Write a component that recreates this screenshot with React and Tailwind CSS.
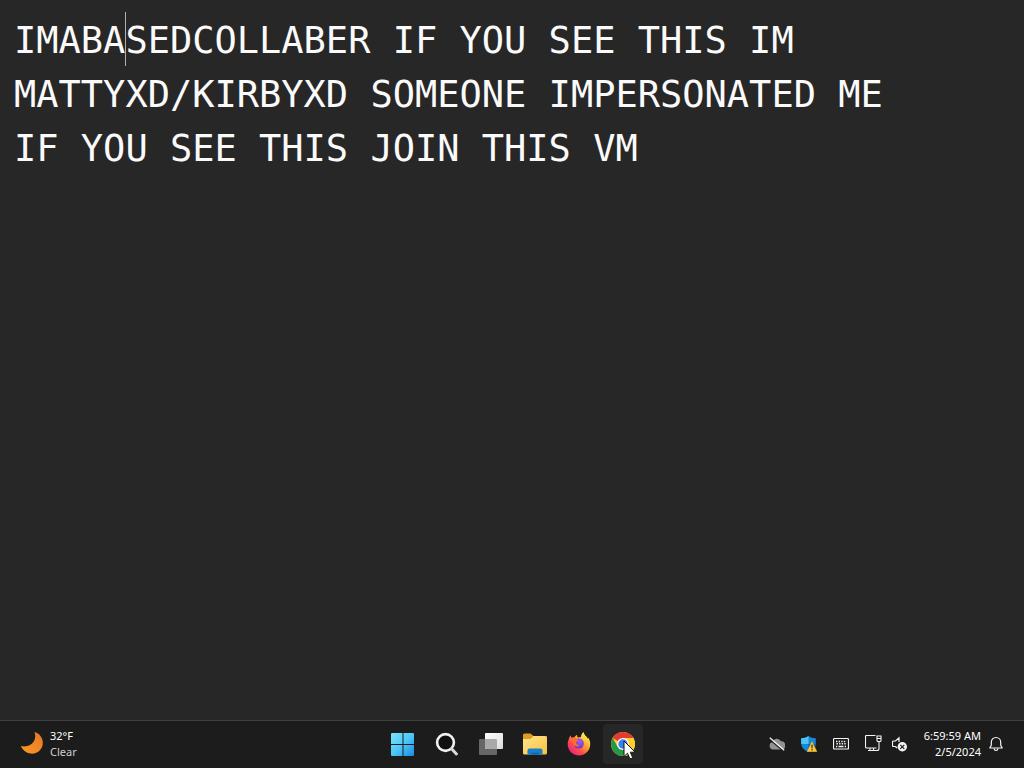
import React, { useState } from "react";

const NOTE = `IMABASEDCOLLABER IF YOU SEE THIS IM
MATTYXD/KIRBYXD SOMEONE IMPERSONATED ME
IF YOU SEE THIS JOIN THIS VM`

function MoonIcon() {
    return (
        <svg width="24" height="24" viewBox="0 0 24 24" aria-hidden="true">
            <defs>
                <linearGradient id="moon" x1="1" y1="0" x2="0" y2="1">
                    <stop offset="0" stopColor="#e8762c" />
                    <stop offset="1" stopColor="#f99a1f" />
                </linearGradient>
            </defs>
            <path d="M14.500 0C20 1.500 23.600 6.800 22.700 12.500C21.700 18.500 16.200 22.500 10.400 21.600C6 20.900 2.500 18.200 0.800 14C5.800 15.300 11 13.800 13.600 9.800C15.500 7 15.800 3.300 14.500 0Z" fill="url(#moon)" />
        </svg>
    )
}

function StartIcon() {
    return (
        <svg width="24" height="24" viewBox="0 0 24 24" aria-hidden="true">
            <defs>
                <linearGradient id="win" gradientUnits="userSpaceOnUse" x1="0" y1="0" x2="24" y2="24">
                    <stop offset="0" stopColor="#7fe3fb" />
                    <stop offset="0.5" stopColor="#4cc8f7" />
                    <stop offset="1" stopColor="#1687e0" />
                </linearGradient>
            </defs>
            <path d="M1 1H11.500V12H0V2Q0 1 1 1ZM12.500 1H22Q23 1 23 2V12H12.500ZM0 13H11.500V24H1Q0 24 0 23ZM12.500 13H23V23Q23 24 22 24H12.500Z" fill="url(#win)" />
        </svg>
    )
}

function SearchIcon() {
    return (
        <svg width="24" height="24" viewBox="0 0 24 24" fill="none" aria-hidden="true">
            <circle cx="10.500" cy="10.500" r="8.400" fill="#111" stroke="#f2f2f2" strokeWidth="2.600" />
            <path d="M16.800 16.900L21.400 22" stroke="#d9d9d9" strokeWidth="3" strokeLinecap="round" />
        </svg>
    )
}

function TaskViewIcon() {
    return (
        <svg width="24" height="24" viewBox="0 0 24 24" aria-hidden="true">
            <defs>
                <linearGradient id="tv" x1="0" y1="0" x2="1" y2="1">
                    <stop offset="0" stopColor="#ffffff" />
                    <stop offset="1" stopColor="#dcdcdc" />
                </linearGradient>
            </defs>
            <rect x="0" y="7" width="18" height="16" rx="1" fill="#666" />
            <rect x="6" y="1" width="18" height="16" rx="1" fill="url(#tv)" />
            <path d="M6 7H17Q18 7 18 8V17H7Q6 17 6 16Z" fill="#a9a9a9" />
        </svg>
    )
}

function FolderIcon() {
    return (
        <svg width="26" height="24" viewBox="0 0 26 24" aria-hidden="true">
            <defs>
                <linearGradient id="folder" x1="0" y1="0" x2="1" y2="1">
                    <stop offset="0" stopColor="#ffe58f" />
                    <stop offset="1" stopColor="#f7c03d" />
                </linearGradient>
            </defs>
            <path d="M1 3Q1 1.500 2.500 1.500H8.500L11.500 4H23.500Q25 4 25 5.500V12H1Z" fill="#dd9d1e" />
            <path d="M1 7H8.500L11.500 4H23.500Q25 4 25 5.500V21Q25 22.500 23.500 22.500H2.500Q1 22.500 1 21Z" fill="url(#folder)" />
            <path d="M5.500 22.500V18.500Q5.500 16.500 7.500 16.500H18.500Q20.500 16.500 20.500 18.500V22.500Z" fill="#1a7fcb" />
            <path d="M9 22.500V21.500Q9 20.800 9.700 20.800H16.300Q17 20.800 17 21.500V22.500Z" fill="#0f65ad" />
        </svg>
    )
}

function FirefoxIcon() {
    return (
        <svg width="24" height="24" viewBox="0 0 24 24" aria-hidden="true">
            <defs>
                <linearGradient id="fox" x1="0.850" y1="0.100" x2="0.150" y2="0.900">
                    <stop offset="0" stopColor="#fff04a" />
                    <stop offset="0.350" stopColor="#ffa632" />
                    <stop offset="0.700" stopColor="#ff4a48" />
                    <stop offset="1" stopColor="#e8208a" />
                </linearGradient>
                <linearGradient id="flame" x1="0.500" y1="0" x2="0.400" y2="1">
                    <stop offset="0" stopColor="#fff04a" />
                    <stop offset="0.500" stopColor="#ffc53a" />
                    <stop offset="1" stopColor="#ff7d3a" />
                </linearGradient>
                <radialGradient id="globe" cx="0.600" cy="0.300" r="0.800">
                    <stop offset="0" stopColor="#a15cf0" />
                    <stop offset="1" stopColor="#5b34bf" />
                </radialGradient>
            </defs>
            <path d="M1.800 7.200C2 5.900 2.700 4.500 3.700 3.500C3.800 4.500 4.100 5.200 4.700 5.900C5.500 5.500 6.300 5.400 7.200 5.500C7.800 4.300 8.900 3.200 10.200 2.700C9.900 3.800 10.200 4.700 11.200 5.400L14.500 4.800C14.300 2.900 15.100 1.200 16.600 0.200C16.900 2.100 17.900 3.300 19.200 4.500C20 5.200 20.500 6.100 20.700 7L21.300 5.800C22.800 8 23.400 10.500 23.200 13C22.700 19.100 17.800 23.500 12 23.500C5.600 23.500 0.700 18.500 0.700 12.300C0.700 10.400 1 8.700 1.800 7.200Z" fill="url(#fox)" />
            <path d="M14 5.500C17.500 6.500 19 9.500 18.300 13C17.900 15 16.800 17 15 18.200C19 17.500 21.500 14.500 21.500 10.800C21.500 8.300 20.500 6.100 19.200 4.500C17.900 3.300 16.900 2.100 16.600 0.200C15.100 1.200 14.300 2.900 14 5.500Z" fill="url(#flame)" />
            <circle cx="11.800" cy="11.600" r="5" fill="url(#globe)" />
            <path d="M4.700 6C6.500 5.200 8.600 5.700 9.600 7C10.400 7.400 11.600 7.500 11.600 8.300C11.400 9.100 9.300 9.300 9 10.400C9 12.400 10.900 13 12.300 13.200C11 15 8.800 14.600 7.200 13.200C5.400 11.400 5.300 8.400 4.700 6Z" fill="#ff6a35" />
        </svg>
    )
}

function ChromeIcon() {
    return (
        <svg width="24" height="24" viewBox="0 0 24 24" aria-hidden="true">
            <circle cx="12" cy="12" r="12" fill="#ffcd2e" />
            <path d="M12 12L1.610 6A12 12 0 0 1 22.390 6H12Z" fill="#e33b2e" />
            <path d="M12 12L6.800 15L1.610 6A12 12 0 0 0 12 24L17.200 15Z" fill="#269847" />
            <path d="M12 6H22.390A12 12 0 0 1 12 24L17.200 15Z" fill="#ffcd2e" />
            <circle cx="12" cy="12" r="6" fill="#fff" />
            <circle cx="12" cy="12" r="4.700" fill="#3b7ff0" />
        </svg>
    )
}

function CursorIcon() {
    return (
        <svg width="14" height="20" viewBox="0 0 14 20" aria-hidden="true">
            <path d="M1 1V16.500L4.500 13.200L7 19L9.800 17.800L7.300 12.200H12.200Z" fill="#fff" stroke="#111" strokeWidth="1" />
        </svg>
    )
}

function CloudOffIcon() {
    return (
        <svg width="16" height="16" viewBox="0 0 16 16" aria-hidden="true">
            <path d="M4 13.500A3.900 3.900 0 0 1 3.300 5.900A4.800 4.800 0 0 1 12 5.300A4.100 4.100 0 0 1 12.500 13.500Z" fill="#929292" />
            <path d="M0.500 3.200L14.300 15" stroke="#1c1c1c" strokeWidth="1.200" />
            <path d="M0.800 1.800L15.200 14.200" stroke="#f5f5f5" strokeWidth="1.300" />
        </svg>
    )
}

function ShieldIcon() {
    return (
        <svg width="16" height="16" viewBox="0 0 16 16" aria-hidden="true">
            <path d="M7.500 0C9.500 1.500 12 2.200 14.800 2.200V7.500C14.800 11.500 11.800 14.200 7.500 15.800C3.200 14.200 0.200 11.500 0.200 7.500V2.200C3 2.200 5.500 1.500 7.500 0Z" fill="#1686d9" />
            <path d="M7.500 0V8H0.200V2.200C3 2.200 5.500 1.500 7.500 0Z" fill="#4cc2f5" />
            <path d="M7.500 8H14.800C14.600 11.700 11.600 14.300 7.500 15.800Z" fill="#0b5ea8" />
            <path d="M11 5.500L16 15.700H6Z" fill="#ffc83d" stroke="#e0a420" strokeWidth="0.500" strokeLinejoin="round" />
            <path d="M10.400 8.800H11.700L11.500 12.400H10.600ZM10.400 13.200H11.700V14.500H10.400Z" fill="#222" />
        </svg>
    )
}

function KeyboardIcon() {
    return (
        <svg width="16" height="16" viewBox="0 0 16 16" fill="none" stroke="#f5f5f5" aria-hidden="true">
            <rect x="0.500" y="2.500" width="15" height="10.500" rx="1" strokeWidth="1.200" />
            <path d="M3 5.500H13.500M3.500 7.700H13" strokeWidth="1.400" strokeDasharray="1.400 1.200" />
            <path d="M3 10.500H4.300M5.500 10.500H10.500M11.700 10.500H13" strokeWidth="1.300" />
        </svg>
    )
}

function NetworkIcon() {
    return (
        <svg width="17" height="17" viewBox="0 0 17 17" fill="none" stroke="#f5f5f5" strokeWidth="1.100" aria-hidden="true">
            <path d="M10.500 0.500H1.500Q0.500 0.500 0.500 1.500V12Q0.500 13 1.500 13H11.500M5 13V15.500M8.500 13V15.500M3 15.500H12" />
            <path d="M12 1H16V5.500Q16 6.500 15 6.500H13Q12 6.500 12 5.500ZM12.500 3.500H15.500M14 6.500V13.500Q14 15.500 12 15.500" />
        </svg>
    )
}

function MutedIcon() {
    return (
        <svg width="16" height="16" viewBox="0 0 16 16" fill="none" stroke="#f5f5f5" aria-hidden="true">
            <path d="M7 6V1.800L3.500 5H1.500Q0.500 5 0.500 6V9.500Q0.500 10.500 1.500 10.500H3.500L5 12" strokeWidth="1.200" />
            <circle cx="10.300" cy="10.800" r="4.700" fill="#f5f5f5" stroke="none" />
            <path d="M8.300 8.800L12.300 12.800M12.300 8.800L8.300 12.800" stroke="#1c1c1c" strokeWidth="1.200" />
        </svg>
    )
}

function BellIcon() {
    return (
        <svg width="14" height="16" viewBox="0 0 14 16" fill="none" stroke="#f5f5f5" strokeWidth="1.200" strokeLinejoin="round" aria-hidden="true">
            <path d="M7 1.500C4.200 1.500 2.300 3.500 2.300 6.200V9.200L0.800 12H13.200L11.700 9.200V6.200C11.700 3.500 9.800 1.500 7 1.500Z" />
            <path d="M5 12.500C5.200 13.800 6 14.500 7 14.500C8 14.500 8.800 13.800 9 12.500" />
        </svg>
    )
}

const apps = [
    { name: "Start", icon: <StartIcon /> },
    { name: "Search", icon: <SearchIcon /> },
    { name: "Task View", icon: <TaskViewIcon /> },
    { name: "File Explorer", icon: <FolderIcon /> },
    { name: "Firefox", icon: <FirefoxIcon /> },
    { name: "Google Chrome", icon: <ChromeIcon />, hovered: true },
]

const tray = [
    { name: "OneDrive", icon: <CloudOffIcon /> },
    { name: "Windows Security", icon: <ShieldIcon /> },
    { name: "Touch keyboard", icon: <KeyboardIcon /> },
]

export default function App() {
    const [note, setNote] = useState(NOTE)

    return (
        <div className="flex min-h-screen flex-col bg-[#272727] text-white">
            <main className="relative flex grow">
                <textarea
                    aria-label="Text editor"
                    spellCheck={false}
                    value={note}
                    onChange={(e) => setNote(e.target.value)}
                    className="w-full resize-none overflow-hidden bg-transparent px-3.5 py-3.5 font-['DejaVu_Sans_Mono',monospace] text-[37px] leading-[54px] text-[#fafafa] outline-none"
                />
                {/* text caret */}
                <span className="absolute left-[125px] top-3 h-[54px] w-px bg-[#b0b0b0]" />
            </main>
            <footer className="grid h-12 grid-cols-[1fr_auto_1fr] items-center border-t border-[#404040] bg-[#1c1c1c] pb-0.5 pl-5 pr-[21px] font-['Noto_Sans',sans-serif] text-[11px] leading-4">
                <button className="flex items-center gap-1.5 justify-self-start text-left">
                    <MoonIcon />
                    <span>
                        <span className="block">32°F</span>
                        <span className="block text-[#cfcfcf]">Clear</span>
                    </span>
                </button>
                <nav className="flex gap-1 pl-0.5">
                    {apps.map((app) => (
                        <button
                            key={app.name}
                            aria-label={app.name}
                            className={`relative flex size-10 items-center justify-center rounded ${app.hovered ? "bg-[#272727]" : ""}`}
                        >
                            {app.icon}
                            {app.hovered && <span className="absolute left-5 top-4"><CursorIcon /></span>}
                        </button>
                    ))}
                </nav>
                <div className="flex items-center justify-self-end">
                    {tray.map((item) => (
                        <button key={item.name} aria-label={item.name} className="flex h-10 w-8 items-center justify-center">
                            {item.icon}
                        </button>
                    ))}
                    <button aria-label="Network and volume" className="flex h-10 items-center gap-2.5 px-2">
                        <NetworkIcon />
                        <MutedIcon />
                    </button>
                    <button className="flex items-center gap-2 pl-2 text-right">
                        <span>
                            <span className="block">6:59:59 AM</span>
                            <span className="block">2/5/2024</span>
                        </span>
                        <BellIcon />
                    </button>
                </div>
            </footer>
        </div>
    )
}
